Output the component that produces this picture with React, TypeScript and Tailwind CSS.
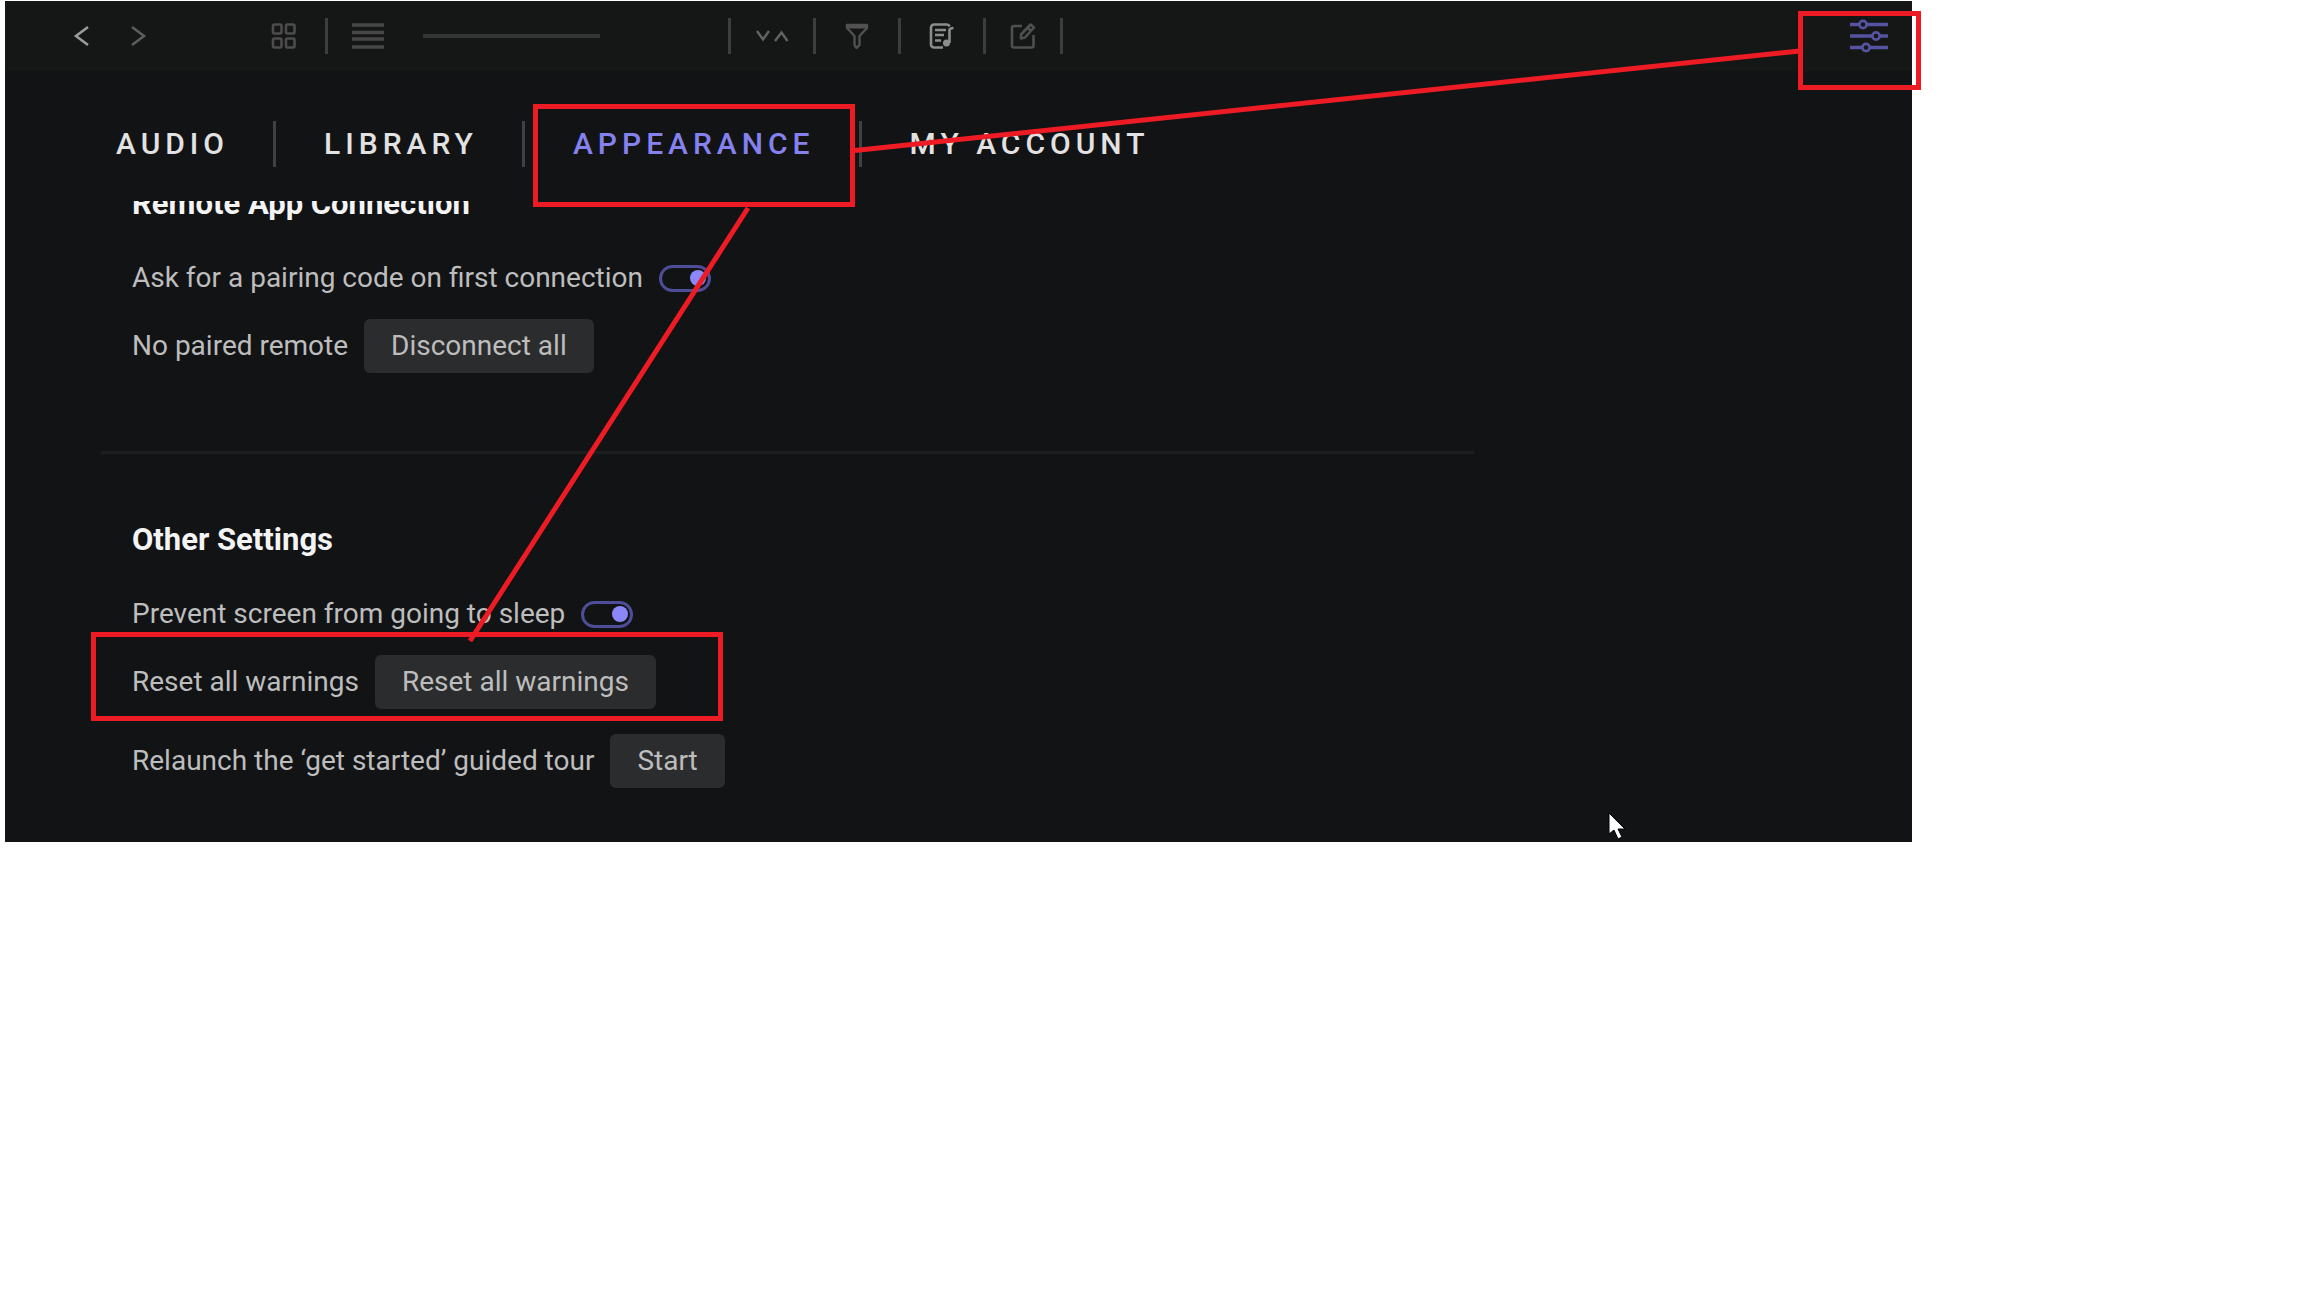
import type { ReactNode } from 'react';

const tabs = ['AUDIO', 'LIBRARY', 'APPEARANCE', 'MY ACCOUNT'];

function Divider({ className = '' }: { className?: string }) {
  return <span className={`h-9 w-[3px] shrink-0 bg-[#3c3d3c] ${className}`} />;
}

function IconButton({ label, className = '', children }: { label: string; className?: string; children: ReactNode }) {
  return (
    <button type="button" aria-label={label} className={`shrink-0 ${className}`}>
      {children}
    </button>
  );
}

function Toolbar() {
  return (
    <header className="flex h-[70px] items-center bg-[#151716] pr-6 pl-[68px]">
      <IconButton label="Back" className="text-[#9a9b9a]">
        <svg width="16" height="22" viewBox="0 0 16 22" fill="none" stroke="currentColor" strokeWidth="2.6">
          <path d="M15 2 3 11l12 9" />
        </svg>
      </IconButton>
      <IconButton label="Forward" className="ml-[42px] text-[#5c5d5c]">
        <svg width="16" height="22" viewBox="0 0 16 22" fill="none" stroke="currentColor" strokeWidth="2.6">
          <path d="m1 2 12 9-12 9" />
        </svg>
      </IconButton>
      <IconButton label="Grid view" className="ml-[124px] text-[#4b4c4b]">
        <svg width="26" height="26" viewBox="0 0 26 26" fill="none" stroke="currentColor" strokeWidth="2.6">
          <rect x="2" y="1.5" width="8.5" height="9" rx="1.5" />
          <rect x="15" y="1.5" width="8.5" height="9" rx="1.5" />
          <rect x="2" y="15.5" width="8.5" height="9" rx="1.5" />
          <rect x="15" y="15.5" width="8.5" height="9" rx="1.5" />
        </svg>
      </IconButton>
      <Divider className="ml-7" />
      <IconButton label="List view" className="ml-6 text-[#464746]">
        <svg width="32" height="26" viewBox="0 0 32 26" stroke="currentColor" strokeWidth="3.6">
          <path d="M0 2h32M0 9.5h32M0 16h32M0 24h32" />
        </svg>
      </IconButton>
      <input
        type="range"
        aria-label="Thumbnail size"
        className="ml-[39px] h-1 w-[177px] shrink-0 appearance-none bg-[#343534] [&::-webkit-slider-thumb]:opacity-0"
      />
      <Divider className="ml-32" />
      <IconButton label="Collapse or expand" className="ml-6 text-[#626362]">
        <svg width="34" height="14" viewBox="0 0 34 14" fill="none" stroke="currentColor" strokeWidth="2.4">
          <path d="m2 2 6 8.5L14 2M20 12l6.500-8.500L32.500 12" />
        </svg>
      </IconButton>
      <Divider className="ml-6" />
      <IconButton label="Filter" className="ml-7 text-[#505150]">
        <svg width="26" height="26" viewBox="0 0 26 26" fill="none" stroke="currentColor" strokeWidth="2.4" strokeLinejoin="round">
          <path d="M3 2h20v3l-7.500 8v9l-3 3-2-3v-9L3 5z" />
          <path d="M3 3.500h20" strokeWidth="4" />
        </svg>
      </IconButton>
      <Divider className="ml-7" />
      <IconButton label="Playlist" className="ml-7 text-[#8b8c8b]">
        <svg width="26" height="26" viewBox="0 0 26 26" fill="none" stroke="currentColor" strokeWidth="2.6">
          <path d="M20.500 3.500C20 2 19 1.500 17.500 1.500H5A3 3 0 0 0 2 4.500v17a3 3 0 0 0 3 3h9" />
          <path d="M6 7h11M6 12h9M6 17.500h6" />
          <path d="M20.500 20V6.500c1-1.500 2.500-1.500 4-1.500" />
          <circle cx="17.500" cy="20" r="3.500" fill="currentColor" stroke="none" />
        </svg>
      </IconButton>
      <Divider className="ml-7" />
      <IconButton label="Edit" className="ml-6 text-[#4e4f4e]">
        <svg width="26" height="26" viewBox="0 0 26 26" fill="none" stroke="currentColor" strokeWidth="2.6" strokeLinejoin="round">
          <path d="M12 3H4a2 2 0 0 0-2 2v17.500a2 2 0 0 0 2 2h17.500a2 2 0 0 0 2-2V12" />
          <path d="M11 15.500v-4L20.500 1.500l3.500 3-9 10z" />
          <path d="m18 5 3 3" />
        </svg>
      </IconButton>
      <Divider className="ml-6" />
      <IconButton label="Settings" className="ml-auto text-[#5653a0]">
        <svg width="38" height="34" viewBox="0 0 38 34" fill="none" stroke="currentColor" strokeWidth="3.4">
          <path d="M0 5.500h9.500M16.500 5.500H38M0 17h22.500M29.500 17H38M0 28.500h12.500M19.500 28.500H38" />
          <g strokeWidth="2.6">
            <circle cx="13" cy="5.500" r="3.600" />
            <circle cx="26" cy="17" r="3.600" />
            <circle cx="16" cy="28.500" r="3.600" />
          </g>
        </svg>
      </IconButton>
    </header>
  );
}

function Toggle({ id, label }: { id: string; label: string }) {
  return (
    <div className="flex items-center gap-4">
      <label htmlFor={id}>{label}</label>
      <input
        id={id}
        type="checkbox"
        role="switch"
        defaultChecked
        className="flex h-[27px] w-[52px] appearance-none items-center rounded-full border-3 border-[#4f4c98] px-0.5 before:size-4 before:rounded-full before:bg-[#8b87f8] checked:justify-end"
      />
    </div>
  );
}

function Action({ id, label, button }: { id: string; label: string; button: string }) {
  return (
    <div className="flex items-center gap-4">
      <span id={id}>{label}</span>
      <button type="button" aria-describedby={id} className="h-[54px] rounded-md bg-[#2b2c2e] px-[27px]">
        {button}
      </button>
    </div>
  );
}

function Annotations() {
  return (
    <svg className="pointer-events-none absolute top-0 left-0" width="1930" height="850" viewBox="0 0 1930 850" fill="none" stroke="#ed1c24" strokeWidth="5" aria-hidden="true">
      <rect x="535.5" y="106.500" width="317" height="98" />
      <rect x="1800.500" y="13.500" width="118" height="74" />
      <rect x="93.500" y="634.500" width="627" height="84" />
      <path d="M855 150.500 1800 51M748 208 470 641" />
      <path d="M1609 813v21l5-4 4 9 4-2-4-8h7z" fill="#fff" stroke="#000" strokeWidth="1" />
    </svg>
  );
}

export default function App() {
  return (
    <div className="relative min-h-screen bg-white font-['Roboto','Liberation_Sans',sans-serif]">
      <div className="w-[83%] pt-px pl-[5px]">
        <div className="bg-[#121315]">
          <Toolbar />
          <nav className="flex h-[130px] items-center pt-4 pl-[63px] text-[30px] leading-8 font-medium text-[#e2e2e2]">
            {tabs.map((tab, i) => (
              <div key={tab} className="flex items-center">
                {i > 0 && <span className="h-[46px] w-[3px] bg-[#3f4042]" />}
                <button
                  type="button"
                  className={`pr-11 pl-12 tracking-[5px] ${tab === 'APPEARANCE' ? 'text-[#8582ef]' : ''}`}
                >
                  {tab}
                </button>
              </div>
            ))}
          </nav>
          <main className="overflow-hidden pb-[54px] text-[28px] leading-8 text-[#bdbdbd]">
            <section className="-mt-[13px] flex flex-col items-start gap-[25px] pl-[127px]">
              <h2 className="mb-[17px] text-[31px] leading-8 font-bold text-[#f4f4f4]">Remote App Connection</h2>
              <Toggle id="pairing" label="Ask for a pairing code on first connection" />
              <Action id="remote" label="No paired remote" button="Disconnect all" />
            </section>
            <hr className="mt-[78px] mr-[23%] mb-[70px] ml-24 border-t-3 border-[#1d1e20]" />
            <section className="flex flex-col items-start gap-[25px] pl-[127px]">
              <h2 className="mb-[17px] text-[31px] leading-8 font-bold text-[#f4f4f4]">Other Settings</h2>
              <Toggle id="sleep" label="Prevent screen from going to sleep" />
              <Action id="warnings" label="Reset all warnings" button="Reset all warnings" />
              <Action id="tour" label="Relaunch the ‘get started’ guided tour" button="Start" />
            </section>
          </main>
        </div>
      </div>
      <Annotations />
    </div>
  );
}
